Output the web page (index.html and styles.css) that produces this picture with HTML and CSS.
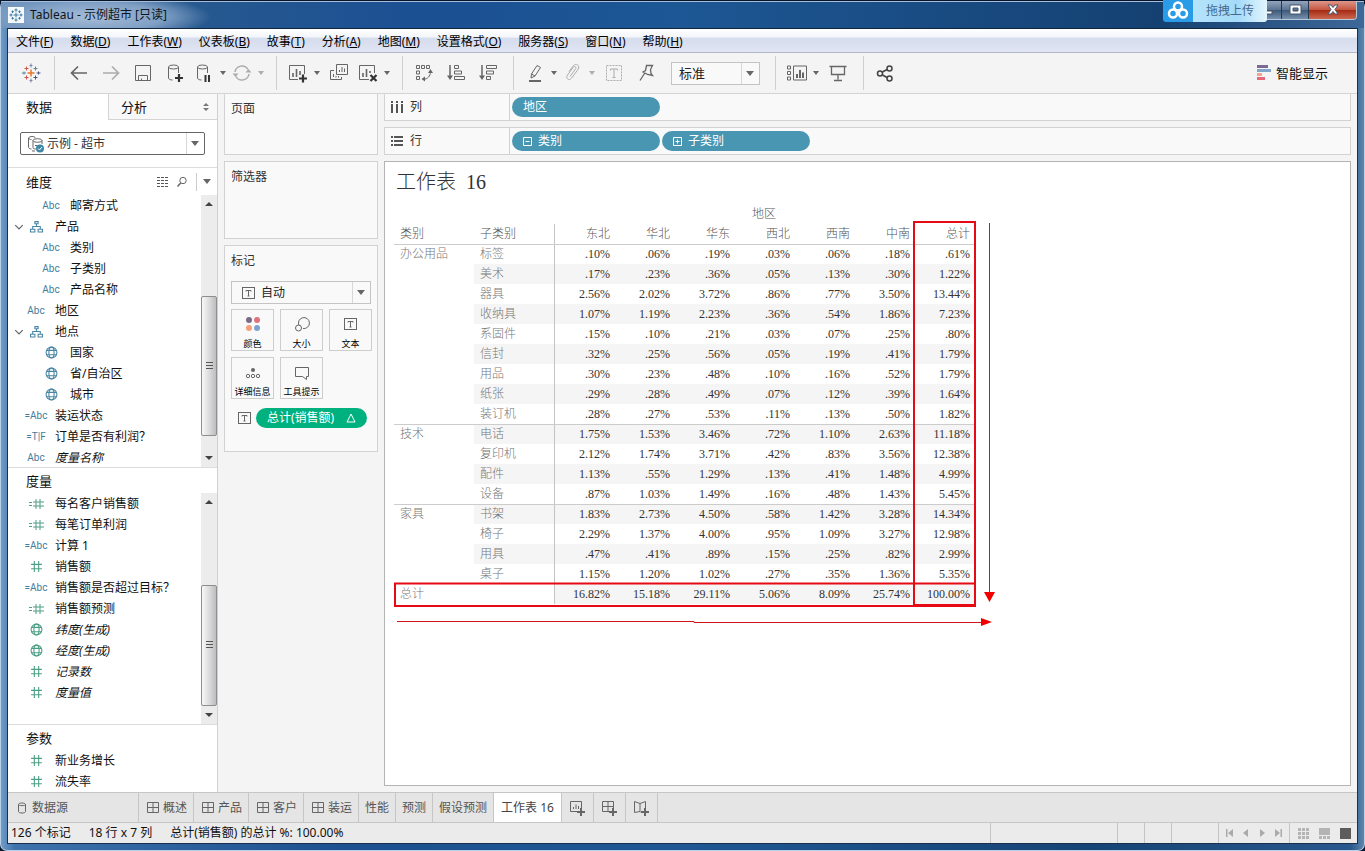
FILE: index.html
```html
<!DOCTYPE html>
<html lang="zh-CN">
<head>
<meta charset="utf-8">
<title>Tableau - 示例超市 [只读]</title>
<link rel="stylesheet" href="styles.css">
</head>
<body>
<svg class="defs" aria-hidden="true">
  <symbol id="hier" viewBox="0 0 12 12"><path d="M4.500 1.500h3v2h-3zM.5 8.500h4v2.500h-4zM7.500 8.500h4v2.500h-4zM6 3.500v2.500M2.500 8.500V6h7v2.500"/></symbol>
  <symbol id="globe" viewBox="0 0 12 12"><circle cx="6" cy="6" r="5"/><ellipse cx="6" cy="6" rx="2.400" ry="5"/><path d="M1.500 4h9M1.500 8h9"/></symbol>
  <symbol id="hash" viewBox="0 0 12 12"><path d="M4 1v10M8 1v10M1 4h10M1 8h10"/></symbol>
  <symbol id="calc" viewBox="0 0 16 12"><path d="M8 1v10M12 1v10M5 4h11M5 8h11M1 4.500h3M1 7.500h3"/></symbol>
  <symbol id="twist" viewBox="0 0 8 8"><path d="M1 2.500l3 3 3-3"/></symbol>
  <symbol id="tbox" viewBox="0 0 13 12"><rect x=".5" y=".5" width="12" height="11"/><path d="M4 4.500V3.500h5v1M6.500 3.500v5.500M5.500 9h2"/></symbol>
  <symbol id="dash" viewBox="0 0 12 12"><path d="M.5 .5h11v10H.5zM6 .5v10M.5 5.500h11"/></symbol>
</svg>

<div class="window">
  <header class="titlebar">
    <svg class="app-icon" viewBox="0 0 14 14"><path class="c1" d="M7 4.500v5M4.500 7h5"/><path class="c2" d="M7 .5v3M5.500 2h3M7 10.500v3M5.500 12h3M.5 7h3M2 5.500v3M10.500 7h3M12 5.500v3M3.500 2.500v2.500M2.500 3.700h2.400M10.500 2.500v2.500M9.300 3.700h2.400M3.500 9v2.500M2.500 10.300h2.400M10.500 9v2.500M9.300 10.300h2.400"/></svg>
    <h1 class="app-title">Tableau - 示例超市 [只读]</h1>
    <div class="winbtns">
      <button class="wb" aria-label="最小化"><svg viewBox="0 0 14 12"><rect x="2" y="7" width="9" height="3"/></svg></button>
      <button class="wb" aria-label="最大化"><svg viewBox="0 0 14 12"><path fill-rule="evenodd" d="M2 1h11v9H2zM5 4h5v3H5z"/></svg></button>
      <button class="wb close" aria-label="关闭"><svg viewBox="0 0 14 12"><path d="M2 1h3l2 2.500L9 1h3L9 5.500l3 4.500H9L7 7.500 5 10H2l3-4.500z"/></svg></button>
    </div>
    <button class="upload"><span class="upload-logo"><svg viewBox="0 0 22 20"><circle cx="11" cy="5.500" r="4"/><circle cx="6" cy="12.500" r="4"/><circle cx="16" cy="12.500" r="4"/></svg></span><span class="upload-text">拖拽上传</span></button>
  </header>

  <div class="client">
    <nav class="menubar">
      <button>文件(<u>F</u>)</button><button>数据(<u>D</u>)</button><button>工作表(<u>W</u>)</button><button>仪表板(<u>B</u>)</button><button>故事(<u>T</u>)</button><button>分析(<u>A</u>)</button><button>地图(<u>M</u>)</button><button>设置格式(<u>O</u>)</button><button>服务器(<u>S</u>)</button><button>窗口(<u>N</u>)</button><button>帮助(<u>H</u>)</button>
    </nav>

    <div class="toolbar">
      <div class="group">
        <button class="tool" aria-label="Tableau"><svg class="ic" viewBox="0 0 20 20"><path stroke="#e8762d" stroke-width="1.500" d="M10 6.500v7M6.500 10h7"/><path stroke="#c9574f" d="M5.500 3.500v4M3.500 5.500h4M5.500 12.500v4M3.500 14.500h4"/><path stroke="#5b879b" d="M14.500 3.500v4M12.500 5.500h4M1 10h4M3 8.500v3"/><path stroke="#49548a" d="M14.500 12.500v4M12.500 14.500h4M15.500 10h4M17.500 8.500v3"/><path stroke="#7a87a8" d="M10 .5v4M8.500 2.500h3M10 15.500v4M8.500 17.500h3"/></svg></button>
      </div>
      <div class="group">
        <button class="tool" aria-label="后退"><svg class="ic" viewBox="0 0 20 20"><path stroke-width="1.700" d="M18 10H3M9 3.500L2.500 10 9 16.500"/></svg></button>
        <button class="tool off" aria-label="前进"><svg class="ic" viewBox="0 0 20 20"><path stroke-width="1.700" d="M2 10h15M11 3.500l6.500 6.500-6.500 6.500"/></svg></button>
        <button class="tool" aria-label="保存"><svg class="ic" viewBox="0 0 20 20"><path d="M2.500 2.500h15v15h-15zM5.500 17.500v-5h9v5M8.500 17.500v-2"/></svg></button>
        <button class="tool" aria-label="新建数据源"><svg class="ic" viewBox="0 0 20 20"><ellipse cx="8.500" cy="4" rx="5" ry="2"/><path d="M3.500 4v11c0 1 1.500 2 4 2M13.500 4v6"/><path stroke="#333" stroke-width="2.200" d="M14 11v8M10 15h8"/></svg></button>
        <button class="tool sm" aria-label="暂停更新"><svg class="ic" viewBox="0 0 20 20"><ellipse cx="8.500" cy="4" rx="5" ry="2"/><path d="M3.500 4v11c0 1 1.500 2 4 2M13.500 4v6"/><path stroke="#333" stroke-width="2" d="M11.500 12v7M15 12v7"/></svg></button><button class="caret" aria-label="暂停选项"></button>
        <button class="tool sm off" aria-label="刷新"><svg class="ic" viewBox="0 0 20 20"><path stroke-width="1.500" d="M3 9a7 7 0 0 1 13-2.500M17 11a7 7 0 0 1-13 2.500"/><path class="solid" d="M13.500 9.500h6L16.500 6zM.5 10.500h6l-3 3.500z"/></svg></button><button class="caret off" aria-label="刷新选项"></button>
      </div>
      <div class="group">
        <button class="tool sm" aria-label="新建工作表"><svg class="ic" viewBox="0 0 20 20"><path d="M10 16.500H1.500v-14h15V11"/><path stroke-width="1.600" d="M5 14v-4M8.500 14V6M12 12V8"/><path stroke="#333" stroke-width="2.200" d="M15 11.500v8M11 15.500h8"/></svg></button><button class="caret" aria-label="新建选项"></button>
        <button class="tool" aria-label="复制工作表"><svg class="ic" viewBox="0 0 20 20"><path d="M7.500 1.500h11v10h-11zM5 7.500H1.500v9h11V14M4.500 14v-3M7 14.500V13M9.500 14.500V13M10.500 9V7M13 9V4M15.500 9V5.500"/></svg></button>
        <button class="tool sm" aria-label="清除工作表"><svg class="ic" viewBox="0 0 20 20"><path d="M11 16.500H1.500v-14h15V10"/><path stroke-width="1.600" d="M5 14v-4M8.500 14V6M12 10V8"/><path stroke="#333" stroke-width="2.200" d="M12.500 12l6 6M18.500 12l-6 6"/></svg></button><button class="caret" aria-label="清除选项"></button>
      </div>
      <div class="group tight">
        <button class="tool" aria-label="交换行和列"><svg class="ic" viewBox="0 0 20 20"><path d="M2.500 2.500h3v3h-3zM7.500 2.500h3v3h-3zM12.500 2.500h3v3h-3zM2.500 8h3v3h-3zM2.500 13.500h3v3h-3zM16.500 9c0 4-3 7-7 7.500"/><path class="solid" d="M14 10l2.500-4 2.500 4zM11 13.500v5L7.500 16z"/></svg></button>
        <button class="tool" aria-label="升序排序"><svg class="ic" viewBox="0 0 20 20"><path d="M4 2v13" stroke-width="1.500"/><path class="solid" d="M1 12.500h6L4 17z"/><path d="M8.500 2.500h4v3h-4zM8.500 8h7v3h-7zM8.500 13.500h10v3h-10z"/></svg></button>
        <button class="tool" aria-label="降序排序"><svg class="ic" viewBox="0 0 20 20"><path d="M4 2v13" stroke-width="1.500"/><path class="solid" d="M1 12.500h6L4 17z"/><path d="M8.500 2.500h10v3h-10zM8.500 8h7v3h-7zM8.500 13.500h4v3h-4z"/></svg></button>
      </div>
      <div class="group">
        <button class="tool sm" aria-label="突出显示"><svg class="ic" viewBox="0 0 20 20"><path d="M6.500 11L12 2.500l3.500 2L10 13l-4 2zM6.500 11L10 13"/><path stroke-width="2" d="M4 18h12"/></svg></button><button class="caret" aria-label="突出显示选项"></button>
        <button class="tool sm off" aria-label="组成员"><svg class="ic" viewBox="0 0 20 20"><path d="M7 13.500l5.500-7.500c1.500-2-.8-3.500-2.300-1.600L4.500 12c-2.300 3.500 1.500 6.300 4 3.200L15 6.500c2.500-4-2-7-4.700-3.700L6 8.500"/></svg></button><button class="caret off" aria-label="组选项"></button>
        <button class="tool off" aria-label="显示标记标签"><svg class="ic" viewBox="0 0 20 20"><path stroke-dasharray="2 1" d="M2.500 2.500h15v15h-15z"/><path d="M6.500 7.500v-1.500h7v1.500M10 6v8.500M8.500 14.500h3"/></svg></button>
        <button class="tool" aria-label="固定轴"><svg class="ic" viewBox="0 0 20 20"><path stroke-width="1.300" d="M10.500 2.500h6l-2 4 .5 4 1.500 2-5-1-4.500-2.500 2.500-1.500zM8.500 10.500L4 17.500"/></svg></button>
        <label class="combo fit"><select aria-label="适合"><option>标准</option></select></label>
      </div>
      <div class="group">
        <button class="tool sm" aria-label="显示卡"><svg class="ic wide" viewBox="0 0 22 20"><path d="M1.500 3h3v3h-3zM1.500 8.500h3v3h-3zM1.500 14h3v3h-3zM7.500 3h13v14h-13z"/><path stroke-width="2" d="M11 15v-4M14 15V7M17 15V9.500"/></svg></button><button class="caret" aria-label="卡选项"></button>
        <button class="tool" aria-label="演示模式"><svg class="ic" viewBox="0 0 20 20"><path stroke-width="1.300" d="M1.500 3.500h17M3.500 3.500v8h13v-8M10 11.500v5M6 17.500h8"/></svg></button>
      </div>
      <div class="group tight last">
        <button class="tool" aria-label="共享"><svg class="ic" viewBox="0 0 20 20"><g stroke-width="1.500" stroke="#444"><circle cx="5" cy="10.500" r="2.500"/><circle cx="14.500" cy="5.500" r="2.500"/><circle cx="14.500" cy="15.500" r="2.500"/><path d="M7.500 9l4.500-2.500M7.500 12l4.500 2.500"/></g></svg></button>
      </div>
      <button class="showme"><svg viewBox="0 0 14 16"><path fill="#7b6a94" d="M0 0h11v3H0z"/><path fill="#80a5c8" d="M0 4h14v3H0z"/><path fill="#f0a58f" d="M0 8h5v3H0z"/><path fill="#e5697a" d="M0 12h8v3H0z"/></svg>智能显示</button>
    </div>

    <main class="main">
      <aside class="pane">
        <div class="pane-tabs"><button class="on">数据</button><button>分析<svg viewBox="0 0 6 8"><path d="M0 3l3-3 3 3zM0 5l3 3 3-3z"/></svg></button></div>
        <div class="source"><label class="combo db">
          <svg class="ic" viewBox="0 0 18 18"><path d="M1.500 3v9c0 1 1 2 3 2M1.500 3c1-2 6-2 7 0M1.500 3c.5 1 1.500 1.500 3 1.500"/><ellipse cx="10.500" cy="5.500" rx="4.500" ry="1.800"/><path d="M6 5.500v7c0 1 1 1.500 3 1.500M15 5.500V9M8 10.500h2.500M5 16h3"/><circle cx="13" cy="13.500" r="4" fill="#3d86a6" stroke="none"/><path stroke="#fff" d="M11 13.500l1.500 1.500 2.500-3"/></svg>
          <select aria-label="数据源"><option>示例 - 超市</option></select></label></div>

        <section class="sec dims">
          <div class="sec-head"><h2>维度</h2>
            <button aria-label="查看数据"><svg viewBox="0 0 12 10"><path stroke="#555" stroke-dasharray="3 1" stroke-width="1" d="M0 .5h12M0 3.500h12M0 6.500h12M0 9.500h12"/></svg></button>
            <button aria-label="查找字段"><svg class="ic" viewBox="0 0 12 12"><circle cx="7" cy="4.500" r="3.200"/><path stroke-width="1.500" d="M4.700 7L1.500 10.500"/></svg></button>
            <button class="caret line" aria-label="菜单"></button></div>
          <div class="scroller">
            <ul class="fields">
              <li class="in"><i></i><b>Abc</b>邮寄方式</li>
              <li><i><svg class="ic"><use href="#twist"/></svg></i><b><svg><use href="#hier"/></svg></b>产品</li>
              <li class="in"><i></i><b>Abc</b>类别</li>
              <li class="in"><i></i><b>Abc</b>子类别</li>
              <li class="in"><i></i><b>Abc</b>产品名称</li>
              <li><i></i><b>Abc</b>地区</li>
              <li><i><svg class="ic"><use href="#twist"/></svg></i><b><svg><use href="#hier"/></svg></b>地点</li>
              <li class="in"><i></i><b><svg><use href="#globe"/></svg></b>国家</li>
              <li class="in"><i></i><b><svg><use href="#globe"/></svg></b>省/自治区</li>
              <li class="in"><i></i><b><svg><use href="#globe"/></svg></b>城市</li>
              <li><i></i><b>=Abc</b>装运状态</li>
              <li><i></i><b>=T|F</b>订单是否有利润？</li>
              <li class="it"><i></i><b>Abc</b><em>度量名称</em></li>
            </ul>
            <div class="bar"><span class="up"></span><span class="s1"></span><span class="thumb t1"></span><span class="s2"></span><span class="down"></span></div>
          </div>
        </section>

        <section class="sec meas">
          <div class="sec-head"><h2>度量</h2></div>
          <div class="scroller">
            <ul class="fields green">
              <li><i></i><b><svg class="w"><use href="#calc"/></svg></b>每名客户销售额</li>
              <li><i></i><b><svg class="w"><use href="#calc"/></svg></b>每笔订单利润</li>
              <li><i></i><b class="blue">=Abc</b>计算 1</li>
              <li><i></i><b><svg><use href="#hash"/></svg></b>销售额</li>
              <li><i></i><b class="blue">=Abc</b>销售额是否超过目标？</li>
              <li><i></i><b><svg class="w"><use href="#calc"/></svg></b>销售额预测</li>
              <li><i></i><b><svg><use href="#globe"/></svg></b><em>纬度(生成)</em></li>
              <li><i></i><b><svg><use href="#globe"/></svg></b><em>经度(生成)</em></li>
              <li><i></i><b><svg><use href="#hash"/></svg></b><em>记录数</em></li>
              <li><i></i><b><svg><use href="#hash"/></svg></b><em>度量值</em></li>
            </ul>
            <div class="bar"><span class="up"></span><span class="s3"></span><span class="thumb t2"></span><span class="down"></span></div>
          </div>
        </section>

        <section class="sec params">
          <div class="sec-head"><h2>参数</h2></div>
          <ul class="fields green">
            <li><i></i><b><svg><use href="#hash"/></svg></b>新业务增长</li>
            <li><i></i><b><svg><use href="#hash"/></svg></b>流失率</li>
          </ul>
        </section>
      </aside>

      <div class="cards">
        <section class="card pages"><h3>页面</h3></section>
        <section class="card filters"><h3>筛选器</h3></section>
        <section class="card marks"><h3>标记</h3>
          <label class="combo mark"><svg class="ic"><use href="#tbox"/></svg><select aria-label="标记类型"><option>自动</option></select></label>
          <div class="mark-grid">
            <button><svg viewBox="0 0 20 18"><circle cx="6" cy="5" r="3" fill="#7b6a86"/><circle cx="14" cy="5" r="3" fill="#e0717f"/><circle cx="6" cy="13" r="3" fill="#f4a178"/><circle cx="14" cy="13" r="3" fill="#7ba2d0"/></svg>颜色</button>
            <button><svg class="ic" viewBox="0 0 20 18"><path d="M7 10.500a5.500 5.500 0 1 1 4 3"/><circle cx="6.500" cy="13" r="3"/></svg>大小</button>
            <button><svg class="ic" viewBox="-3 -3 20 18"><use href="#tbox" width="13" height="12"/></svg>文本</button>
            <button><svg class="ic" viewBox="0 0 20 18"><circle cx="10" cy="7" r="2" fill="#666" stroke="none"/><circle cx="5" cy="13" r="1.700"/><circle cx="10" cy="13" r="1.700"/><circle cx="15" cy="13" r="1.700"/></svg>详细信息</button>
            <button><svg class="ic" viewBox="0 0 20 18"><path d="M3.500 4.500h13v9h-2v3l-4-3h-7z"/></svg>工具提示</button>
          </div>
          <div class="mark-row"><svg class="ic"><use href="#tbox"/></svg><button class="pill gpill">总计(销售额)<svg viewBox="0 0 10 10"><path d="M5 1l4 8H1z"/></svg></button></div>
        </section>
      </div>

      <div class="view">
        <div class="shelf"><span class="shelf-name"><svg viewBox="0 0 12 12"><path d="M0 0h2v2H0zM0 3h2v9H0zM5 0h2v2H5zM5 3h2v9H5zM10 0h2v2h-2zM10 3h2v9h-2z"/></svg>列</span><button class="pill">地区</button></div>
        <div class="shelf"><span class="shelf-name"><svg viewBox="0 0 12 12"><path d="M0 1h2v2H0zM3 1h9v2H3zM0 5h2v2H0zM3 5h9v2H3zM0 9h2v2H0zM3 9h9v2H3z"/></svg>行</span><button class="pill"><svg viewBox="0 0 9 9"><path d="M.5 .5h8v8h-8zM2.500 4.500h4"/></svg>类别</button><button class="pill"><svg viewBox="0 0 9 9"><path d="M.5 .5h8v8h-8zM2.500 4.500h4M4.500 2.500v4"/></svg>子类别</button></div>
        <section class="canvas">
          <h2>工作表&nbsp; 16</h2>
          <div class="crosstab">
            <table>
              <colgroup><col class="c-name"><col class="c-name"><col span="7" class="c-num"></colgroup>
              <thead>
                <tr class="dim"><td colspan="2"></td><th colspan="7">地区</th></tr>
                <tr class="heads"><th>类别</th><th>子类别</th><th>东北</th><th>华北</th><th>华东</th><th>西北</th><th>西南</th><th>中南</th><th>总计</th></tr>
              </thead>
              <tbody>
                <tr class="first"><th rowspan="9" class="cat">办公用品</th><th>标签</th><td>.10%</td><td>.06%</td><td>.19%</td><td>.03%</td><td>.06%</td><td>.18%</td><td>.61%</td></tr>
                <tr class="alt"><th>美术</th><td>.17%</td><td>.23%</td><td>.36%</td><td>.05%</td><td>.13%</td><td>.30%</td><td>1.22%</td></tr>
                <tr><th>器具</th><td>2.56%</td><td>2.02%</td><td>3.72%</td><td>.86%</td><td>.77%</td><td>3.50%</td><td>13.44%</td></tr>
                <tr class="alt"><th>收纳具</th><td>1.07%</td><td>1.19%</td><td>2.23%</td><td>.36%</td><td>.54%</td><td>1.86%</td><td>7.23%</td></tr>
                <tr><th>系固件</th><td>.15%</td><td>.10%</td><td>.21%</td><td>.03%</td><td>.07%</td><td>.25%</td><td>.80%</td></tr>
                <tr class="alt"><th>信封</th><td>.32%</td><td>.25%</td><td>.56%</td><td>.05%</td><td>.19%</td><td>.41%</td><td>1.79%</td></tr>
                <tr><th>用品</th><td>.30%</td><td>.23%</td><td>.48%</td><td>.10%</td><td>.16%</td><td>.52%</td><td>1.79%</td></tr>
                <tr class="alt"><th>纸张</th><td>.29%</td><td>.28%</td><td>.49%</td><td>.07%</td><td>.12%</td><td>.39%</td><td>1.64%</td></tr>
                <tr><th>装订机</th><td>.28%</td><td>.27%</td><td>.53%</td><td>.11%</td><td>.13%</td><td>.50%</td><td>1.82%</td></tr>
                <tr class="first alt"><th rowspan="4" class="cat">技术</th><th>电话</th><td>1.75%</td><td>1.53%</td><td>3.46%</td><td>.72%</td><td>1.10%</td><td>2.63%</td><td>11.18%</td></tr>
                <tr><th>复印机</th><td>2.12%</td><td>1.74%</td><td>3.71%</td><td>.42%</td><td>.83%</td><td>3.56%</td><td>12.38%</td></tr>
                <tr class="alt"><th>配件</th><td>1.13%</td><td>.55%</td><td>1.29%</td><td>.13%</td><td>.41%</td><td>1.48%</td><td>4.99%</td></tr>
                <tr><th>设备</th><td>.87%</td><td>1.03%</td><td>1.49%</td><td>.16%</td><td>.48%</td><td>1.43%</td><td>5.45%</td></tr>
                <tr class="first alt"><th rowspan="4" class="cat">家具</th><th>书架</th><td>1.83%</td><td>2.73%</td><td>4.50%</td><td>.58%</td><td>1.42%</td><td>3.28%</td><td>14.34%</td></tr>
                <tr><th>椅子</th><td>2.29%</td><td>1.37%</td><td>4.00%</td><td>.95%</td><td>1.09%</td><td>3.27%</td><td>12.98%</td></tr>
                <tr class="alt"><th>用具</th><td>.47%</td><td>.41%</td><td>.89%</td><td>.15%</td><td>.25%</td><td>.82%</td><td>2.99%</td></tr>
                <tr><th>桌子</th><td>1.15%</td><td>1.20%</td><td>1.02%</td><td>.27%</td><td>.35%</td><td>1.36%</td><td>5.35%</td></tr>
                <tr class="alt"><th colspan="2" class="cat">总计</th><td>16.82%</td><td>15.18%</td><td>29.11%</td><td>5.06%</td><td>8.09%</td><td>25.74%</td><td>100.00%</td></tr>
              </tbody>
            </table>
            <svg class="notes" viewBox="0 0 610 430"><g fill="none" stroke="#e60a14" stroke-width="2"><path d="M520 18h61v383h-61z"/><path d="M1 379.500h580v22.500H1z"/></g><g fill="none" stroke="#d0141c"><path d="M595.500 19v370M3 417.500h297v1h289"/></g><path fill="#f00000" d="M590 388h11l-5.500 10zM587 414v8l11-4z"/></svg>
          </div>
        </section>
      </div>
    </main>

    <div class="sheets">
      <button class="ds"><svg class="ic" viewBox="0 0 12 12"><path d="M2.500 2.500c0-2 7-2 7 0v7c0 2-7 2-7 0zM2.500 2.500c0 1.500 7 1.500 7 0"/></svg>数据源</button>
      <button><svg class="ic"><use href="#dash"/></svg>概述</button><button><svg class="ic"><use href="#dash"/></svg>产品</button><button><svg class="ic"><use href="#dash"/></svg>客户</button><button><svg class="ic"><use href="#dash"/></svg>装运</button>
      <button>性能</button><button>预测</button><button>假设预测</button><button class="on">工作表 16</button>
      <button class="new" aria-label="新建工作表"><svg class="ic" viewBox="0 0 16 16"><path d="M8 11.500H1.500V1.500h11V8M4.500 9V7M7 9V4.500M9.500 9V6"/><path stroke-width="2" d="M12 8v8M8 12h8"/></svg></button>
      <button class="new" aria-label="新建仪表板"><svg class="ic" viewBox="0 0 16 16"><path d="M8 11.500H1.500V1.500h11V8M1.500 6.500h11M7 1.500v10"/><path stroke-width="2" d="M12 8v8M8 12h8"/></svg></button>
      <button class="new" aria-label="新建故事"><svg class="ic" viewBox="0 0 16 16"><path d="M8 12.500l-1-1-5.500 1V1.500L7 3.500v8M7 3.500l5.500-2V8"/><path stroke-width="2" d="M12 8v8M8 12h8"/></svg></button>
    </div>

    <footer class="status">
      <span>126 个标记</span><span>18 行 x 7 列</span><span>总计(销售额) 的总计 %: 100.00%</span>
      <div class="cells"><i class="w127"></i><i></i><i></i><i class="w47"></i>
        <div class="nav"><button aria-label="第一个"><svg viewBox="0 0 8 8"><path d="M0 0h1.500v8H0zM7 0v8L2 4z"/></svg></button><button aria-label="上一个"><svg viewBox="0 0 8 8"><path d="M6 0v8L1 4z"/></svg></button><button aria-label="下一个"><svg viewBox="0 0 8 8"><path d="M2 0v8l5-4z"/></svg></button><button aria-label="最后一个"><svg viewBox="0 0 8 8"><path d="M6.500 0H8v8H6.500zM1 0v8l5-4z"/></svg></button></div>
        <div class="modes"><button aria-label="工作表排序"><svg viewBox="0 0 11 11"><path d="M0 0h3v3H0zM4 0h3v3H4zM8 0h3v3H8zM0 4h3v3H0zM4 4h3v3H4zM8 4h3v3H8zM0 8h3v3H0zM4 8h3v3H4zM8 8h3v3H8z"/></svg></button><button aria-label="胶片"><svg viewBox="0 0 11 11"><path d="M0 0h11v7H0zM0 8h3v3H0zM4 8h3v3H4zM8 8h3v3H8z"/></svg></button><button class="on" aria-label="工作表标签"><svg viewBox="0 0 11 11"><path d="M0 0h11v11H0z"/></svg></button></div>
      </div>
    </footer>
  </div>
</div>
</body>
</html>
```
FILE: styles.css
```css
* { box-sizing: border-box; }
body { margin: 0; background: #06142c; font: 12px/16px "Noto Sans", "Noto Sans CJK SC", sans-serif; color: #222; }
button { margin: 0; padding: 0; border: 0; background: none; font: inherit; color: inherit; white-space: nowrap; }
select { appearance: none; border: 0; background: none; font: inherit; color: inherit; padding: 0; width: 100%; outline: 0; }
h1, h2, h3, ul { margin: 0; padding: 0; font-weight: 400; list-style: none; }
i, b { font-style: normal; font-weight: 400; }
svg { display: block; flex: none; }
.defs { position: absolute; width: 0; height: 0; }
.ic { fill: none; stroke: #666; }
.ic .solid { fill: #666; stroke: none; }

.window {
  display: flex; flex-direction: column; min-height: 100vh; padding: 0 7px 7px;
  border-radius: 7px; border: solid #b9cfe6; border-width: 0 1px 1px;
  background: linear-gradient(90deg, #6f9cc8 0, #3d72ab 1%, #1c5090 25%, #1f5794 50%, #164475 80%, #27578d 99%, #5f87ad 100%);
}
.titlebar {
  position: relative; display: flex; align-items: center; height: 28px; margin: 0 -7px; padding: 0 7px;
  border-top: 1px solid #06142c; box-shadow: inset 0 1px #a8bed8;
  background: radial-gradient(ellipse 120px 24px at 90px 16px, #a6bcd6 0, #7f9fc5 60%, transparent 100%), linear-gradient(90deg, #6c93bd, #27598f 14%, #1b5093 30%, #1d5794 50%, #154172 85%, #3d6897);
}
.app-icon { width: 16px; height: 16px; background: #f4f8fb; fill: none; stroke: #3a7ba0; padding: 1px; }
.app-title { margin-left: 6px; font-size: 12px; line-height: 16px; color: #0c1520; }
.winbtns { display: flex; align-self: flex-start; margin-left: auto; height: 19px; border: 1px solid #b8c8d8; border-top: 0; border-radius: 0 0 4px 4px; overflow: hidden; }
.wb { display: flex; justify-content: center; align-items: center; width: 27px; border-right: 1px solid #26384e; background: linear-gradient(#93a5bc, #5a7391 50%, #3d5878 51%, #7691ae); }
.wb svg { width: 14px; height: 12px; fill: #fff; stroke: #44546a; stroke-width: 1; }
.wb.close { width: 47px; border: 0; background: linear-gradient(#e0968a, #c4553f 50%, #a52a13 51%, #cc6850); }
.upload { position: absolute; right: 97px; top: -1px; display: flex; height: 22px; width: 104px; overflow: hidden; border-radius: 0 0 3px 3px; color: #45688b; }
.upload-logo { display: grid; place-items: center; width: 30px; height: 22px; background: #2a9be6; }
.upload-logo svg { width: 22px; height: 20px; fill: none; stroke: #fff; stroke-width: 2.500; }
.upload-text { flex: 1; line-height: 22px; background: linear-gradient(90deg, #b5e4fb, #a4daf9 60%, #e2f5fd); }

.client { flex: 1; display: flex; flex-direction: column; border-top: 1px solid #12263f; background: #f4f4f4; outline: 1px solid #18314e; }
.menubar { display: flex; gap: 17px; height: 24px; padding: 2px 8px 0; align-items: center; color: #000; border-bottom: 1px solid #b4b8c6; background: linear-gradient(#fff, #f3f5fa 35%, #d5dcec 40%, #e1e5f4); }
.menubar u { text-underline-offset: 1px; }

.toolbar { display: flex; align-items: center; height: 41px; padding: 3px 0; border-bottom: 1px solid #d4d4d4; }
.group { display: flex; align-items: center; height: 100%; padding: 0 9px 0 8px; border-right: 1px solid #cfcfcf; }
.group:first-child { padding: 0 7px; }
.group.tight { padding: 0 9px 0 5px; }
.group.last { border: 0; }
.tool { display: grid; place-items: center; width: 32px; height: 28px; }
.tool.sm { width: 26px; }
.tool svg { width: 20px; height: 20px; }
.tool svg.wide { width: 22px; }
.tool.off { opacity: .5; }
.caret { display: grid; place-items: center; width: 12px; height: 20px; }
.caret::before, .combo::after { content: ""; border: solid transparent; border-width: 4px 3px 0; border-top-color: #666; }
.caret.off { opacity: .5; }
.combo { position: relative; display: flex; align-items: center; border: 1px solid #c4c4c4; background: #f9f9f9; }
.combo::after { position: absolute; right: 5px; border-width: 5px 4px 0; }
.combo::before { content: ""; position: absolute; right: 17px; top: 0; bottom: 0; border-left: 1px solid #d8d8d8; }
.combo.fit { width: 89px; height: 23px; margin: 0 6px 0 9px; padding-left: 7px; font-size: 13px; }
.showme { display: flex; align-items: center; gap: 5px; margin-left: auto; padding-right: 29px; font-size: 13px; color: #111; }
.showme svg { width: 14px; height: 16px; }

.main { flex: 1; display: grid; grid-template-columns: 210px 154px minmax(0, 1fr); column-gap: 6px; padding-right: 6px; }
.pane { display: flex; flex-direction: column; background: #fff; border-right: 1px solid #d0d0d0; color: #111; }
.pane-tabs { display: flex; height: 26px; font-size: 13px; }
.pane-tabs button { flex: 1; display: flex; align-items: center; justify-content: space-between; padding: 0 8px 0 12px; background: #f8f8f8; border: solid #d4d4d4; border-width: 0 0 1px 1px; }
.pane-tabs .on { flex: 0 0 100px; padding-left: 18px; background: #fff; border: 0; }
.pane-tabs svg { width: 6px; height: 8px; fill: #777; }
.source { padding: 12px; height: 47px; }
.combo.db { height: 23px; gap: 2px; padding-left: 6px; border-color: #666; border-radius: 2px; background: #fff; color: #333; }
.combo.db svg { width: 18px; height: 18px; }
.sec { border-top: 1px solid #dcdcdc; }
.sec-head { display: flex; align-items: center; height: 25px; padding-left: 18px; }
.sec-head h2 { font-size: 13px; line-height: 18px; }
.dims .sec-head { height: 27px; }
.dims h2 { margin-right: auto; }
.sec-head button svg { width: 12px; height: 12px; margin-left: 7px; fill: none; }
.sec-head .caret.line { width: 21px; height: 18px; margin-left: 8px; border-left: 1px solid #ccc; }
.sec-head .caret.line::before { border-width: 5px 4px 0; }
.scroller { display: flex; justify-content: space-between; }
.dims .scroller { height: 272px; }
.meas .scroller { height: 231px; }
.fields li { display: flex; align-items: center; height: 21px; padding-left: 6px; white-space: nowrap; }
.fields .in { padding-left: 21px; }
.fields i { width: 10px; }
.fields i svg { width: 10px; height: 10px; }
.fields b { display: flex; justify-content: center; width: 24px; margin-right: 7px; font: 10px/14px Roboto, sans-serif; color: #3f7d9c; }
.fields b svg { width: 13px; height: 13px; fill: none; stroke: #4a86a4; }
.fields b svg.w { width: 16px; height: 12px; }
.green b svg { stroke: #4d9e86; }
.fields em { font-style: italic; }
.bar { display: flex; flex-direction: column; width: 16px; background: #ececec; }
.up, .down { display: grid; place-items: center; height: 18px; }
.up::before, .down::before { content: ""; border: solid transparent; border-width: 0 4px 4px; border-bottom-color: #444; }
.down::before { border-width: 4px 4px 0; border-top-color: #444; }
.s1 { flex: 83; } .s2 { flex: 13; } .s3 { flex: 1; }
.thumb { display: grid; place-items: center; border: 1px solid #8e8e8e; border-radius: 2px; background: linear-gradient(90deg, #f8f8f8, #dcdcdc 50%, #bdbdc2); }
.thumb::before { content: ""; width: 7px; height: 9px; background: repeating-linear-gradient(#555 0 1px, transparent 1px 3px); }
.t1 { height: 140px; } .t2 { height: 121px; }

.cards { display: flex; flex-direction: column; gap: 6px; }
.card { padding: 6px; border: 1px solid #d2d2d2; background: #f9f9f9; }
.card h3 { font-size: 12px; line-height: 18px; color: #333; }
.pages { height: 61px; border-top: 0; }
.filters { height: 78px; }
.marks { height: 207px; }
.combo.mark { width: 140px; height: 23px; margin-top: 11px; padding-left: 10px; gap: 6px; }
.mark svg, .mark-row > svg { width: 13px; height: 12px; }
.mark-grid { display: grid; grid-template-columns: repeat(3, 43px); gap: 6px; margin-top: 5px; }
.mark-grid button { display: flex; flex-direction: column; align-items: center; justify-content: flex-end; height: 42px; border: 1px solid #cdcdcd; font-size: 9px; line-height: 13px; color: #000; }
.mark-grid svg { width: 20px; height: 18px; margin-bottom: 4px; }
.mark-row { display: flex; align-items: center; gap: 5px; margin: 9px 0 0 7px; }
.pill { display: flex; align-items: center; gap: 6px; width: 148px; height: 20px; padding: 0 11px; border-radius: 10px; background: #4996b2; color: #fff; }
.pill svg { width: 9px; height: 9px; fill: none; stroke: #fff; }
.gpill { width: 111px; justify-content: space-between; background: #00b180; }
.gpill svg { width: 10px; height: 10px; }

.view { display: flex; flex-direction: column; gap: 6px; padding-bottom: 6px; }
.shelf { display: flex; align-items: center; gap: 2px; height: 28px; border: 1px solid #d2d2d2; background: #f9f9f9; }
.shelf:first-child { height: 27px; border-top: 0; }
.shelf-name { display: flex; align-items: center; gap: 7px; align-self: stretch; width: 125px; padding-left: 6px; border-right: 1px solid #d2d2d2; color: #333; }
.shelf-name svg { width: 12px; height: 12px; fill: #555; }
.canvas { flex: 1; padding: 6px 9px; border: 1px solid #b4b4b4; background: #fff; }
.canvas h2 { padding-left: 2px; font: 20px/28px "Liberation Serif", "Noto Sans CJK SC", serif; font-weight: 300; color: #333; }
.crosstab { position: relative; margin-top: 8px; }
.crosstab table { width: 580px; table-layout: fixed; border-collapse: separate; border-spacing: 0; font: 12px/19px "Liberation Serif", "Noto Sans CJK SC", serif; color: #333; }
.c-name { width: 80px; } .c-num { width: 60px; }
.crosstab th, .crosstab td { height: 20px; padding: 0 4px 0 0; text-align: right; font-weight: 300; border: 0; }
.crosstab th { padding-top: 1px; color: #777; }
.crosstab .dim th { text-align: center; padding-right: 0; color: #555; }
.crosstab tbody th, .heads th:nth-child(-n+2) { text-align: left; vertical-align: top; padding-left: 6px; }
.crosstab .heads th { color: #555; }
.crosstab .first > * { border-top: 1px solid #ccc; }
.crosstab .first > th { padding-top: 0; }
.crosstab .alt > * { background: #f5f5f5; }
.crosstab .alt > .cat { background: #fff; }
.crosstab td:nth-last-child(7), .heads th:nth-last-child(7) { border-left: 1px solid #c4c4c4; }
.notes { position: absolute; left: 0; top: 0; width: 610px; height: 430px; }

.sheets { display: flex; height: 31px; border: solid #c6c6c6; border-width: 1px 0; background: #e5e5e5; color: #555; }
.sheets button { display: flex; align-items: center; gap: 4px; padding: 0 6px; border-right: 1px solid #c6c6c6; }
.sheets button:has(use) { padding-left: 8px; }
.sheets svg { width: 12px; height: 12px; }
.sheets .ds { width: 131px; padding-left: 8px; }
.sheets .on { padding: 0 7px; background: #fff; color: #444; }
.sheets .new { width: 32px; justify-content: center; padding: 0; }
.sheets .new svg { width: 16px; height: 16px; }
.status { display: flex; align-items: center; gap: 18px; height: 20px; padding-left: 3px; background: #ebebeb; color: #111; }
.cells { display: flex; align-self: stretch; margin-left: auto; }
.cells > * { width: 27px; border-left: 1px solid #c4c4c4; }
.cells .w127 { width: 127px; }
.cells .w47 { width: 47px; }
.cells .nav { display: flex; align-items: center; gap: 8px; width: 71px; padding-left: 7px; }
.nav svg { width: 8px; height: 8px; fill: #aaa; }
.cells .modes { display: flex; align-items: center; gap: 10px; width: 68px; padding-left: 8px; }
.modes svg { width: 11px; height: 11px; fill: #b4b4b4; }
.modes .on svg { fill: #5c5c5c; }
```
